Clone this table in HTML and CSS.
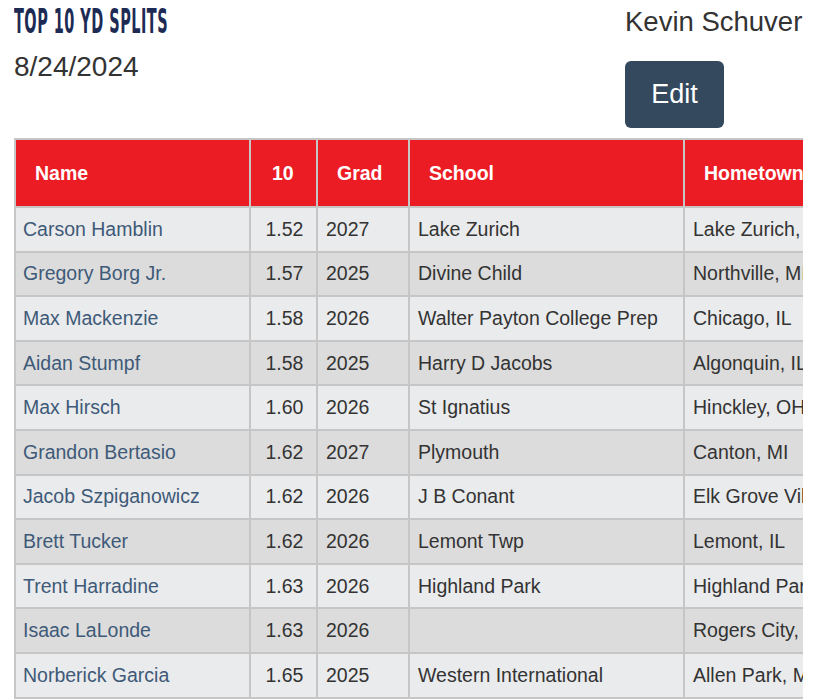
FILE: index.html
```html
<!DOCTYPE html>
<html lang="en">
<head>
<meta charset="utf-8">
<title>Top 10 YD Splits</title>
<link rel="stylesheet" href="styles.css">
</head>
<body>
<div class="page">
  <div class="top">
    <div class="top-left">
      <h1 class="title">TOP 10 YD SPLITS</h1>
      <div class="date">8/24/2024</div>
    </div>
    <div class="top-right">
      <div class="author">Kevin Schuver</div>
      <button class="edit">Edit</button>
    </div>
  </div>
  <div class="table-wrap">
    <table class="splits">
      <colgroup>
        <col class="c-name"><col class="c-ten"><col class="c-grad"><col class="c-school"><col class="c-home">
      </colgroup>
      <thead>
        <tr><th>Name</th><th class="ten">10</th><th>Grad</th><th>School</th><th>Hometown</th></tr>
      </thead>
      <tbody>
        <tr><td><a href="#">Carson Hamblin</a></td><td class="ten">1.52</td><td>2027</td><td>Lake Zurich</td><td>Lake Zurich, IL</td></tr>
        <tr><td><a href="#">Gregory Borg Jr.</a></td><td class="ten">1.57</td><td>2025</td><td>Divine Child</td><td>Northville, MI</td></tr>
        <tr><td><a href="#">Max Mackenzie</a></td><td class="ten">1.58</td><td>2026</td><td>Walter Payton College Prep</td><td>Chicago, IL</td></tr>
        <tr><td><a href="#">Aidan Stumpf</a></td><td class="ten">1.58</td><td>2025</td><td>Harry D Jacobs</td><td>Algonquin, IL</td></tr>
        <tr><td><a href="#">Max Hirsch</a></td><td class="ten">1.60</td><td>2026</td><td>St Ignatius</td><td>Hinckley, OH</td></tr>
        <tr><td><a href="#">Grandon Bertasio</a></td><td class="ten">1.62</td><td>2027</td><td>Plymouth</td><td>Canton, MI</td></tr>
        <tr><td><a href="#">Jacob Szpiganowicz</a></td><td class="ten">1.62</td><td>2026</td><td>J B Conant</td><td>Elk Grove Village, IL</td></tr>
        <tr><td><a href="#">Brett Tucker</a></td><td class="ten">1.62</td><td>2026</td><td>Lemont Twp</td><td>Lemont, IL</td></tr>
        <tr><td><a href="#">Trent Harradine</a></td><td class="ten">1.63</td><td>2026</td><td>Highland Park</td><td>Highland Park, MI</td></tr>
        <tr><td><a href="#">Isaac LaLonde</a></td><td class="ten">1.63</td><td>2026</td><td></td><td>Rogers City, MI</td></tr>
        <tr><td><a href="#">Norberick Garcia</a></td><td class="ten">1.65</td><td>2025</td><td>Western International</td><td>Allen Park, MI</td></tr>
      </tbody>
    </table>
  </div>
</div>
</body>
</html>
```
FILE: styles.css
```css
* { box-sizing: border-box; }
html, body { margin: 0; padding: 0; background: #fff; }
body { font-family: "Liberation Sans", Arial, sans-serif; color: #333; }

.page { padding: 0 0 0 14px; width: 814px; overflow: hidden; }

.top { display: flex; justify-content: space-between; width: 789px; }
.top-left { display: flex; flex-direction: column; }
.title {
  margin: 7px 0 0 0;
  font-family: "Liberation Sans Narrow", "DejaVu Sans Condensed", sans-serif;
  font-weight: 700;
  font-size: 33px;
  line-height: 30px;
  color: #1d2b54;
  white-space: nowrap;
  transform: scaleX(0.487);
  transform-origin: left center;
  letter-spacing: 1px;
}
.date { margin-top: 14px; font-size: 28px; line-height: 32px; color: #333; }

.top-right { display: flex; flex-direction: column; align-items: flex-start; width: 178px; }
.author { margin-top: 6px; font-size: 27.5px; line-height: 32px; color: #333; white-space: nowrap; }
.edit {
  margin-top: 23px;
  width: 99px; height: 67px;
  background: #34495e; color: #fff;
  border: 0; border-radius: 6px;
  font-family: "Liberation Sans", Arial, sans-serif;
  font-size: 27px;
  padding: 0;
}

.table-wrap { margin-top: 10px; width: 789px; overflow: hidden; }
.splits { border-collapse: collapse; table-layout: fixed; width: 909px; }
.c-name { width: 235px; }
.c-ten { width: 67px; }
.c-grad { width: 92px; }
.c-school { width: 275px; }
.c-home { width: 240px; }

.splits th, .splits td { border: 2px solid #c6c6c6; white-space: nowrap; overflow: hidden; }
.splits th {
  background: #ec1c24; color: #fff; font-weight: 700; font-size: 19.5px;
  text-align: left; padding: 0 19px; height: 68px;
}
.splits th.ten { padding: 0 0 0 21px; }
.splits td { font-size: 19.5px; padding: 0 7px 0 8px; height: 44.6px; color: #333; }
.splits td:first-child { padding-left: 7px; }
.splits td.ten { text-align: center; padding: 0 0 0 2px; }
.splits tbody tr:nth-child(odd) td { background: #eaebed; }
.splits tbody tr:nth-child(even) td { background: #dcdcdc; }
.splits a { color: #3e5a78; text-decoration: none; }
```
